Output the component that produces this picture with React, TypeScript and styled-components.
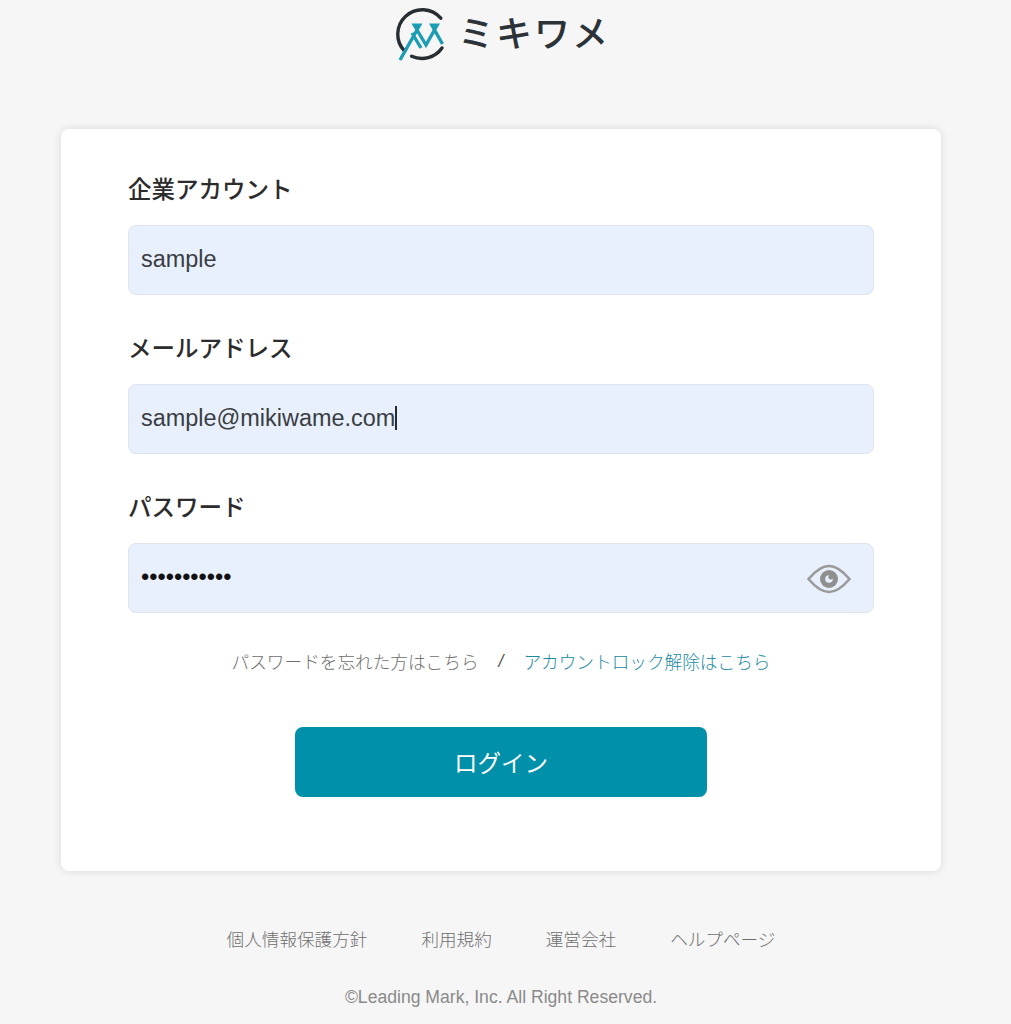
import React from "react";
import styled, { createGlobalStyle } from "styled-components";

const Global = createGlobalStyle`
  html, body { margin: 0; padding: 0; background: #f6f6f6; }
  * { box-sizing: border-box; }
  body { font-family: "Liberation Sans", "Noto Sans CJK JP", sans-serif; }
`;

const Page = styled.div`
  width: 1011px;
  height: 1024px;
  overflow: hidden;
  padding-right: 9px;
  display: flex;
  flex-direction: column;
  align-items: center;
  background: #f6f6f6;
`;

const Brand = styled.header`
  height: 129px;
  width: 100%;
  display: flex;
  justify-content: center;
  align-items: flex-start;
  gap: 6px;
  padding-top: 2px;
`;

const BrandName = styled.span`
  margin-top: 3px;
  font-family: "Noto Sans CJK JP", sans-serif;
  font-size: 36px;
  line-height: 52px;
  font-weight: 500;
  letter-spacing: 2px;
  color: #2b3238;
`;

const Card = styled.main`
  width: 880px;
  height: 742px;
  background: #fff;
  border-radius: 8px;
  box-shadow: 0 0 8px rgba(0, 0, 0, 0.12);
  padding: 41px 67px 0;
  display: flex;
  flex-direction: column;
`;

const Field = styled.div`
  height: 159px;
  display: flex;
  flex-direction: column;
`;

const Label = styled.label`
  height: 36px;
  margin-bottom: 19px;
  font-family: "Noto Sans CJK JP", sans-serif;
  font-size: 23.5px;
  line-height: 36px;
  font-weight: 500;
  color: #2c2c2c;
`;

const InputBox = styled.div`
  height: 70px;
  background: #e8f0fe;
  border: 1px solid #dfe4ee;
  border-radius: 8px;
  padding: 0 12px 2px;
  display: flex;
  align-items: center;
  justify-content: space-between;
  font-size: 23.45px;
  color: #3a3d42;
`;

const Value = styled.span`
  display: inline-flex;
  align-items: center;
`;

const Caret = styled.span`
  width: 1.5px;
  height: 24px;
  background: #2a2a2a;
`;

const Dots = styled.span`
  color: #111;
  font-size: 23.5px;
  font-weight: 400;
  letter-spacing: 0;
`;

const EyeButton = styled.button`
  border: 0;
  background: none;
  padding: 0;
  margin: 3px 10px 0 0;
  display: flex;
`;

const LinkRow = styled.nav`
  margin-top: 0;
  height: 28px;
  display: flex;
  justify-content: center;
  align-items: center;
  font-family: "Noto Sans CJK JP", sans-serif;
  font-size: 17.65px;
  font-weight: 300;
  color: #6f6f6f;
`;

const Slash = styled.span`
  margin: 0 20px;
  color: #555;
  font-family: "Liberation Sans", sans-serif;
  font-style: italic;
  font-weight: 400;
`;

const TealLink = styled.a`
  color: #1a8aa3;
`;

const LoginButton = styled.button`
  align-self: center;
  margin-top: 52px;
  width: 412px;
  height: 70px;
  border: 0;
  border-radius: 8px;
  background: #0090aa;
  color: #fff;
  font-family: "Noto Sans CJK JP", sans-serif;
  font-size: 23.5px;
  font-weight: 400;
`;

const FooterLinks = styled.nav`
  margin-top: 53px;
  height: 28px;
  display: flex;
  gap: 54px;
  align-items: center;
  font-family: "Noto Sans CJK JP", sans-serif;
  font-size: 17.6px;
  font-weight: 300;
  color: #6f6f6f;
`;

const Copyright = styled.p`
  margin: 31px 0 0;
  font-size: 17.6px;
  line-height: 28px;
  color: #8a8a8a;
`;

const Logo = () => (
  <svg width="60" height="62" viewBox="0 0 60 62" fill="none">
    <path d="M48.8 16.2 A24.5 24.5 0 1 0 12.7 49.3" stroke="#262d33" strokeWidth="3.4" strokeLinecap="round" />
    <path d="M19.6 54.2 A24.5 24.5 0 0 0 50 46" stroke="#262d33" strokeWidth="3.4" strokeLinecap="round" />
    <path
      d="M8 58 L25 28 L34 43 L42.5 28 L50.5 42 M20 31 L29 46"
      stroke="#1d9db4"
      strokeWidth="3.4"
    />
    <path d="M19.5 21.5 H30.5 L25 31 Z M37 21.5 H48 L42.5 31 Z" fill="#1d9db4" />
  </svg>
);

const Eye = () => (
  <svg width="44" height="30" viewBox="0 0 44 30" fill="none">
    <path d="M1.5 15 C10 5 16 2 22 2 C28 2 34 5 42.5 15 C34 25 28 28 22 28 C16 28 10 25 1.5 15 Z" stroke="#9a9a9a" strokeWidth="2.6" />
    <circle cx="22" cy="15" r="9" fill="#8f8f8f" />
    <circle cx="22" cy="15" r="3.8" fill="#e8f0fe" />
    <circle cx="23.8" cy="13.2" r="2.4" fill="#8f8f8f" />
  </svg>
);

export default function App() {
  return (
    <Page>
      <Global />
      <Brand>
        <Logo />
        <BrandName>ミキワメ</BrandName>
      </Brand>
      <Card>
        <Field>
          <Label>企業アカウント</Label>
          <InputBox>
            <Value>sample</Value>
          </InputBox>
        </Field>
        <Field>
          <Label>メールアドレス</Label>
          <InputBox>
            <Value>
              sample@mikiwame.com
              <Caret />
            </Value>
          </InputBox>
        </Field>
        <Field>
          <Label>パスワード</Label>
          <InputBox>
            <Dots>•••••••••••</Dots>
            <EyeButton aria-label="パスワードを表示">
              <Eye />
            </EyeButton>
          </InputBox>
        </Field>
        <LinkRow>
          <span>パスワードを忘れた方はこちら</span>
          <Slash>/</Slash>
          <TealLink>アカウントロック解除はこちら</TealLink>
        </LinkRow>
        <LoginButton>ログイン</LoginButton>
      </Card>
      <FooterLinks>
        <span>個人情報保護方針</span>
        <span>利用規約</span>
        <span>運営会社</span>
        <span>ヘルプページ</span>
      </FooterLinks>
      <Copyright>©Leading Mark, Inc. All Right Reserved.</Copyright>
    </Page>
  );
}
